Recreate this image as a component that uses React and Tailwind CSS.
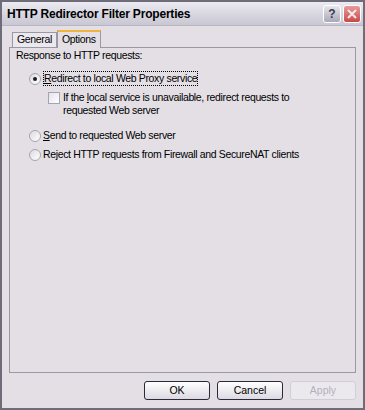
import React from "react";

const font = { fontFamily: '"Liberation Sans", Arial, sans-serif' };

const Radio = ({ checked }) => (
  <span className="w-[12px] h-[12px] rounded-full border border-[#a6a4b0] bg-gradient-to-br from-[#dcdae2] to-white flex items-center justify-center shrink-0">
    {checked && <span className="w-[4px] h-[4px] rounded-full bg-[#1e1e1e]" />}
  </span>
);

const Button = ({ label, disabled }) => (
  <button
    className={`w-[66px] h-[19px] rounded-[3px] border text-[10.5px] flex items-center justify-center ${
      disabled
        ? "border-[#d2ced6] bg-[#ece9ee] text-[#b4b0ba]"
        : "border-[#2a2a3a] bg-gradient-to-b from-white to-[#dcd9e2] text-black"
    }`}
  >
    {label}
  </button>
);

export default function App() {
  return (
    <div
      className="w-[365px] h-[410px] bg-[#e3dfe5] border-2 border-[#6e6c78] flex flex-col text-black"
      style={font}
    >
      {/* title bar */}
      <div className="h-[24px] bg-gradient-to-b from-[#ecebf2] via-[#d9d8e2] to-[#c8c7d2] flex items-center justify-between pl-[5px] pr-[2px] border-b border-[#b8b6c2]">
        <span className="text-[12px] font-bold tracking-[-0.2px]">
          HTTP Redirector Filter Properties
        </span>
        <div className="flex gap-[2px]">
          <span className="w-[18px] h-[18px] rounded-[3px] border border-white bg-gradient-to-b from-[#e6e6ee] to-[#a9a8b8] text-[#3a3a4a] text-[12px] font-bold flex items-center justify-center">
            ?
          </span>
          <span className="w-[18px] h-[18px] rounded-[3px] border border-white bg-gradient-to-b from-[#e89a9a] to-[#c94848] flex items-center justify-center">
            <svg width="10" height="10" viewBox="0 0 10 10">
              <path d="M1 1L9 9M9 1L1 9" stroke="#f4eaea" strokeWidth="2" />
            </svg>
          </span>
        </div>
      </div>

      {/* body */}
      <div className="flex-1 flex flex-col px-[7px] pt-[3px] pb-[8px] text-[10.5px] tracking-[-0.35px]">
        {/* tabs */}
        <div className="flex items-end h-[18px] pl-[3px]">
          <div className="h-[15px] px-[4px] border border-b-0 border-[#9a98a4] bg-[#ebe8ee] flex items-center">
            General
          </div>
          <div className="h-[18px] px-[4px] border border-b-0 border-[#9a98a4] border-t-[2px] border-t-[#f0b43c] bg-[#e3dfe5] flex items-center -mb-px relative z-10">
            Options
          </div>
        </div>

        {/* panel */}
        <div className="flex-1 border border-[#9a98a4] bg-[#e3dfe5] px-[6px] pt-[1px] leading-[13px]">
          <div>Response to HTTP requests:</div>

          <div className="flex items-center gap-[2px] mt-[9px] pl-[13px]">
            <Radio checked />
            <span className="border border-dotted border-black">
              <u>R</u>edirect to local Web Proxy service
            </span>
          </div>

          <div className="flex items-start gap-[3px] mt-[5px] pl-[32px]">
            <span className="w-[12px] h-[12px] mt-[1px] border border-[#a6a4b0] bg-gradient-to-br from-[#e4e2ea] to-white shrink-0" />
            <span>
              If the <u>l</u>ocal service is unavailable, redirect requests to
              <br />
              requested Web server
            </span>
          </div>

          <div className="flex items-center gap-[2px] mt-[12px] pl-[13px]">
            <Radio />
            <span>
              <u>S</u>end to requested Web server
            </span>
          </div>

          <div className="flex items-center gap-[2px] mt-[6px] pl-[13px]">
            <Radio />
            <span>
              Re<u>j</u>ect HTTP requests from Firewall and SecureNAT clients
            </span>
          </div>
        </div>

        {/* buttons */}
        <div className="flex justify-end gap-[7px] mt-[8px] tracking-normal">
          <Button label="OK" />
          <Button label="Cancel" />
          <Button label="Apply" disabled />
        </div>
      </div>
    </div>
  );
}
